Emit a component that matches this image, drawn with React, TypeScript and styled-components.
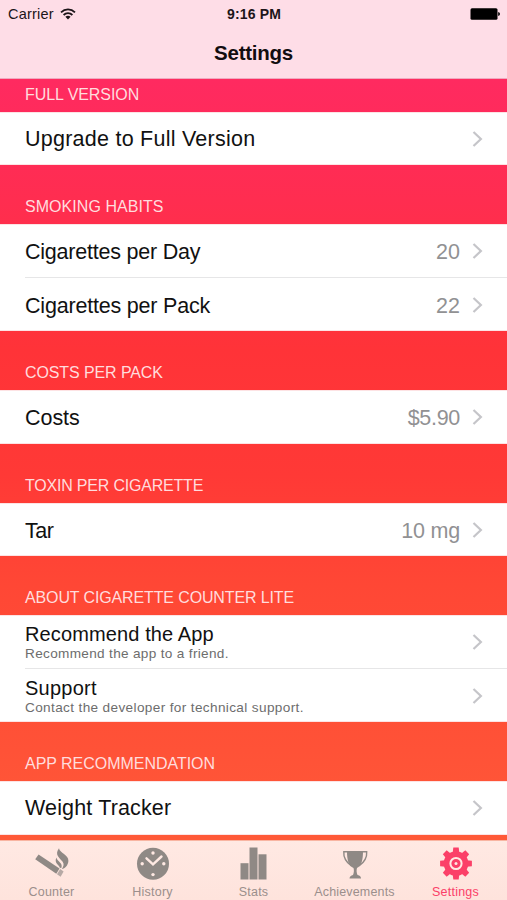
import React from "react";
import styled, { createGlobalStyle } from "styled-components";

const GlobalStyle = createGlobalStyle`
  * { box-sizing: border-box; }
  body { margin: 0; font-family: "Liberation Sans", Arial, sans-serif; }
`;

const Screen = styled.div`
  width: 507px;
  height: 900px;
  display: flex;
  flex-direction: column;
  overflow: hidden;
  background: linear-gradient(#ff2a60 80px, #ff2d50 200px, #ff3338 350px, #ff3936 475px, #ff4735 585px, #ff5237 750px, #ff5a38 850px);
`;

const TopBar = styled.header`
  height: 79px;
  background: #fedde7;
  border-bottom: 1px solid #efa9bf;
`;

const StatusBar = styled.div`
  height: 28px;
  display: grid;
  grid-template-columns: 1fr auto 1fr;
  align-items: center;
  padding: 0 7px 0 8px;
  font-size: 14.5px;
  color: #1c1519;
`;

const Carrier = styled.div`
  display: flex;
  align-items: center;
  gap: 6px;
  letter-spacing: 0.2px;
`;

const Clock = styled.div`
  font-weight: 700;
  font-size: 14px;
  letter-spacing: 0.15px;
`;

const Battery = styled.svg`
  justify-self: end;
`;

const Title = styled.h1`
  margin: 12px 0 0;
  text-align: center;
  font-size: 20.5px;
  line-height: 25px;
  font-weight: 700;
  letter-spacing: -0.25px;
  color: #120d10;
`;

const SectionTitle = styled.h2<{ $height: number; $spacing: number }>`
  margin: 0;
  height: ${(p) => p.$height}px;
  display: flex;
  align-items: flex-end;
  padding: 0 25px 8px;
  font-size: 16px;
  line-height: 19px;
  font-weight: 400;
  letter-spacing: ${(p) => p.$spacing}px;
  color: #ffdcdd;
`;

const Rows = styled.div`
  background: #fff;
  box-shadow: inset 0 1px #fde3e4, inset 0 -1px #fde3e4;
`;

const Row = styled.div<{ $height: number }>`
  height: ${(p) => p.$height}px;
  display: flex;
  align-items: stretch;
  padding-left: 25px;
`;

const RowBody = styled.div<{ $divided: boolean }>`
  flex: 1;
  display: flex;
  align-items: center;
  padding-right: 24px;
  border-bottom: ${(p) => (p.$divided ? "1px solid #e6e6e7" : "0")};
`;

const Labels = styled.div<{ $top: number }>`
  flex: 1;
  padding-top: ${(p) => p.$top}px;
`;

const Label = styled.div<{ $size: number; $spacing: number }>`
  font-size: ${(p) => p.$size}px;
  line-height: 23px;
  letter-spacing: ${(p) => p.$spacing}px;
  color: #111;
`;

const Detail = styled.div<{ $spacing: number }>`
  font-size: 13.6px;
  line-height: 15px;
  letter-spacing: ${(p) => p.$spacing}px;
  color: #6d6d6d;
`;

const Value = styled.div<{ $spacing: number; $top: number }>`
  font-size: 21.5px;
  line-height: 23px;
  padding-top: ${(p) => p.$top}px;
  letter-spacing: ${(p) => p.$spacing}px;
  margin-right: 12px;
  color: #919193;
`;

const Chevron = styled.svg`
  display: block;
`;

const TabBar = styled.nav`
  margin-top: auto;
  height: 60px;
  display: grid;
  grid-template-columns: repeat(5, 101px);
  padding-left: 1px;
  background: linear-gradient(#ffe9e3, #fee3dc);
  border-top: 1px solid #f8b5a2;
`;

const Tab = styled.div<{ $active: boolean; $spacing: number }>`
  display: flex;
  flex-direction: column;
  align-items: center;
  padding-top: 5px;
  font-size: 12.5px;
  line-height: 15px;
  gap: 5px;
  letter-spacing: ${(p) => p.$spacing}px;
  color: ${(p) => (p.$active ? "#fb4068" : "#9b8f8c")};
`;

const TabIcon = styled.svg`
  display: block;
  color: #8f8985;
`;

const ActiveIcon = styled(TabIcon)`
  color: #fb4068;
`;

type Item = { label: string; spacing: number; top: number; detail?: string; detailSpacing?: number; value?: string; valueSpacing?: number; height: number };
type Section = { title: string; spacing: number; height: number; items: Item[] };

const sections: Section[] = [
  { title: "FULL VERSION", spacing: -0.07, height: 33, items: [{ label: "Upgrade to Full Version", spacing: 0.25, top: 2, height: 53 }] },
  {
    title: "SMOKING HABITS", spacing: 0.05, height: 59,
    items: [
      { label: "Cigarettes per Day", spacing: -0.22, top: 4, value: "20", height: 54 },
      { label: "Cigarettes per Pack", spacing: -0.2, top: 4, value: "22", height: 53 },
    ],
  },
  { title: "COSTS PER PACK", spacing: -0.1, height: 59, items: [{ label: "Costs", spacing: -0.05, top: 2, value: "$5.90", valueSpacing: -0.3, height: 54 }] },
  { title: "TOXIN PER CIGARETTE", spacing: -0.2, height: 59, items: [{ label: "Tar", spacing: -0.5, top: 3, value: "10 mg", valueSpacing: -0.2, height: 53 }] },
  {
    title: "ABOUT CIGARETTE COUNTER LITE", spacing: -0.13, height: 59,
    items: [
      { label: "Recommend the App", spacing: 0.12, top: 1, detail: "Recommend the app to a friend.", detailSpacing: 0.32, height: 54 },
      { label: "Support", spacing: 0.25, top: 1, detail: "Contact the developer for technical support.", detailSpacing: 0.36, height: 53 },
    ],
  },
  { title: "APP RECOMMENDATION", spacing: -0.03, height: 59, items: [{ label: "Weight Tracker", spacing: 0.15, top: 1, height: 54 }] },
];

const GEAR_ANGLES = [0, 45, 90, 135, 180, 225, 270, 315];

const CigaretteIcon = () => (
  <TabIcon width="36" height="34" viewBox="0 0 36 34" fill="currentColor">
    <path d="M4.600 8.400 L25.500 22.600 L22.300 27.800 L1.200 13.200 Z" />
    <path d="M26.200 23.100 L29.600 25.500 L26.600 30.700 L23 28.300 Z" opacity=".65" />
    <path d="M25 2.200 C25.500 7 34.800 8.500 34.400 15 C34 19.500 31 22.800 27.800 23 C29.500 20.500 30.500 18 28.500 15.500 C26.500 12.500 19.800 9 25 2.200 Z" />
    <path d="M22.500 11.500 C23 15.500 29.500 17 27.300 22 L25.800 21.800 C25.500 19 19.500 17 22.500 11.500 Z" />
  </TabIcon>
);

const ClockIcon = () => (
  <TabIcon width="36" height="34" viewBox="0 0 36 34">
    <circle cx="18" cy="17.800" r="16" fill="currentColor" />
    <g fill="#ffe9e3">
      <circle cx="18" cy="7" r="1.700" />
      <circle cx="18" cy="28.600" r="1.700" />
      <circle cx="7.200" cy="17.800" r="1.700" />
      <circle cx="28.800" cy="17.800" r="1.700" />
    </g>
    <path d="M11.500 12.300 L18 18.300 L26.500 10.500" fill="none" stroke="#ffe9e3" strokeWidth="2.400" strokeLinecap="round" />
  </TabIcon>
);

const BarsIcon = () => (
  <TabIcon width="36" height="34" viewBox="0 0 36 34" fill="currentColor">
    <rect x="4.500" y="17.200" width="8" height="16.300" />
    <rect x="13.500" y="1.500" width="8" height="32" />
    <rect x="22.500" y="8.300" width="8" height="25.200" />
  </TabIcon>
);

const TrophyIcon = () => (
  <TabIcon width="36" height="34" viewBox="0 0 36 34">
    <path d="M10 5 H26 C26 14 24.500 20 20 22 C19.300 24 19.500 27 20.500 29 C23 29.500 24 30.500 24 32.500 H12.500 C12.500 30.500 14 29.500 16 29 C17 27 17.200 24 16.500 22 C11.500 20 10 14 10 5 Z" fill="currentColor" />
    <path d="M12 5.700 H6.800 C6.300 12 9 16 14.500 20 M24.500 5.700 H29.700 C30.200 12 27.500 16 22 20" fill="none" stroke="currentColor" strokeWidth="1.400" />
  </TabIcon>
);

const GearIcon = () => (
  <ActiveIcon width="36" height="34" viewBox="0 0 36 34">
    <g fill="currentColor">
      <circle cx="18" cy="17.500" r="12.300" />
      {GEAR_ANGLES.map((a) => (
        <path key={a} d="M14.700 7 L15.300 1.600 H20.700 L21.300 7 Z" transform={`rotate(${a} 18 17.500)`} />
      ))}
    </g>
    <circle cx="18" cy="17.500" r="5.600" fill="none" stroke="#ffe9e3" strokeWidth="2" />
    <circle cx="18" cy="17.500" r="1.500" fill="#ffe9e3" />
  </ActiveIcon>
);

const tabs = [
  { name: "Counter", spacing: 0.2, icon: <CigaretteIcon /> },
  { name: "History", spacing: 0.25, icon: <ClockIcon /> },
  { name: "Stats", spacing: 0.25, icon: <BarsIcon /> },
  { name: "Achievements", spacing: 0.15, icon: <TrophyIcon /> },
  { name: "Settings", spacing: 0.25, icon: <GearIcon /> },
];

export default function App() {
  return (
    <>
      <GlobalStyle />
      <Screen>
        <TopBar>
          <StatusBar>
            <Carrier>
              Carrier
              <svg width="16" height="12" viewBox="0 0 16 12" fill="none" stroke="#1c1519" strokeWidth="1.800">
                <path d="M1 4.300 C5 0.400 11 0.400 15 4.300 M3.600 7 C6.100 4.600 9.900 4.600 12.400 7" />
                <path d="M5.400 8.800 Q8 6.600 10.600 8.800 L8 11.500 Z" fill="#1c1519" stroke="none" />
              </svg>
            </Carrier>
            <Clock>9:16 PM</Clock>
            <Battery width="30" height="12" viewBox="0 0 30 12">
              <rect x="0.500" y="0.300" width="27" height="11.400" rx="1.500" />
              <path d="M28.200 4 Q30 4.500 30 6 T28.200 8 Z" />
            </Battery>
          </StatusBar>
          <Title>Settings</Title>
        </TopBar>
        <main>
          {sections.map((section) => (
            <section key={section.title}>
              <SectionTitle $height={section.height} $spacing={section.spacing}>{section.title}</SectionTitle>
              <Rows>
                {section.items.map((item, i) => (
                  <Row key={item.label} $height={item.height}>
                    <RowBody $divided={i < section.items.length - 1}>
                      <Labels $top={item.top}>
                        <Label $size={item.detail ? 20 : 21.5} $spacing={item.spacing}>{item.label}</Label>
                        {item.detail && <Detail $spacing={item.detailSpacing ?? 0}>{item.detail}</Detail>}
                      </Labels>
                      {item.value && <Value $spacing={item.valueSpacing ?? 0} $top={item.top}>{item.value}</Value>}
                      <Chevron width="11" height="18" viewBox="0 0 11 18" fill="none" stroke="#c5c5c9" strokeWidth="2.200">
                        <path d="M1.500 2 L8.900 9 L1.500 16" />
                      </Chevron>
                    </RowBody>
                  </Row>
                ))}
              </Rows>
            </section>
          ))}
        </main>
        <TabBar>
          {tabs.map((tab) => (
            <Tab key={tab.name} $active={tab.name === "Settings"} $spacing={tab.spacing}>
              {tab.icon}
              {tab.name}
            </Tab>
          ))}
        </TabBar>
      </Screen>
    </>
  );
}
